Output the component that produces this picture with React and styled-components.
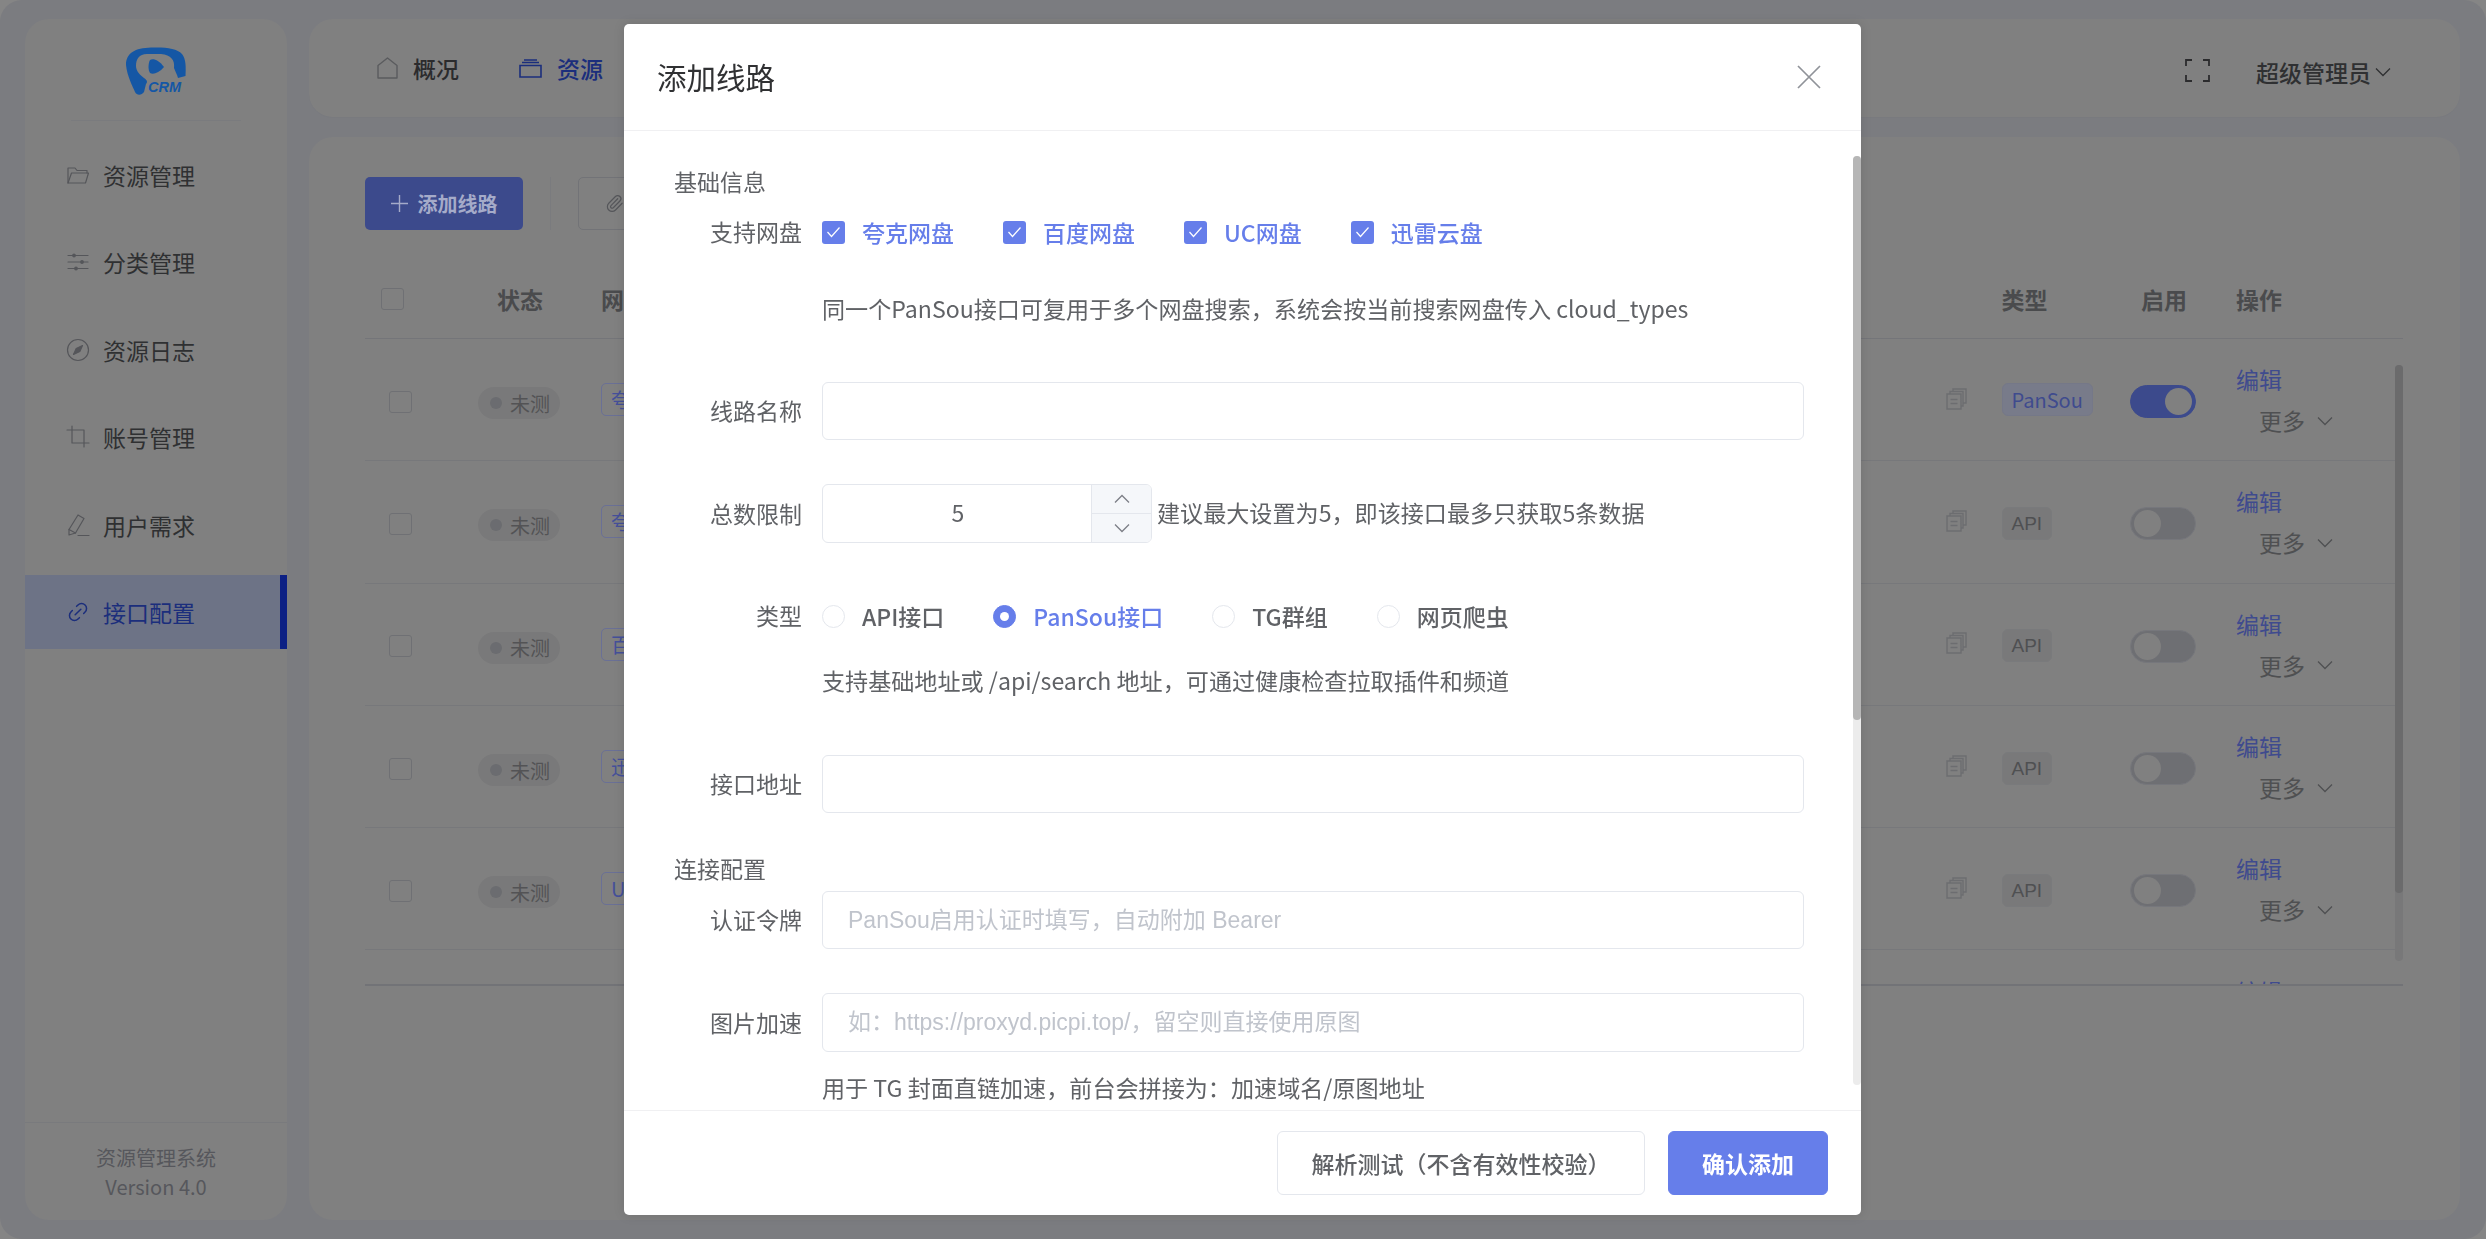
import React from 'react'
import styled, { createGlobalStyle } from 'styled-components'
import { Link2, Paperclip } from 'lucide-react'

const GlobalStyle = createGlobalStyle`
    html, body {
        margin: 0;
        padding: 0;
        background: #858585;
        font-family: "Noto Sans CJK SC", "Noto Sans", sans-serif;
    }
    * { box-sizing: border-box; }
`

const Shell = styled.div`
    width: 2486px;
    height: 1239px;
    display: flex;
    gap: 22px;
    padding: 19px 26px 19px 25px;
    background: #7b7c80;
    border-radius: 22px;
    overflow: hidden;
`

const Sidebar = styled.aside`
    width: 262px;
    flex: none;
    display: flex;
    flex-direction: column;
    background: #808080;
    border-radius: 24px;
`

const LogoArea = styled.div`
    height: 102px;
    margin: 0 46px;
    padding-top: 27px;
    display: flex;
    justify-content: center;
    border-bottom: 1px solid #7a7b7e;
`

const Nav = styled.nav`
    flex: 1;
    display: flex;
    flex-direction: column;
    gap: 13.4px;
    margin-top: 17px;
`

const NavItem = styled.div`
    height: 74px;
    display: flex;
    align-items: center;
    gap: 13px;
    padding-left: 41px;
    font-size: 23px;
    color: ${p => (p.$active ? '#1b2e7c' : '#2f3032')};
    background: ${p => (p.$active ? '#6d7386' : 'transparent')};
    border-right: 7px solid ${p => (p.$active ? '#0c2084' : 'transparent')};
    svg {
        width: 24px;
        height: 24px;
        flex: none;
        color: ${p => (p.$active ? '#1b2e7c' : '#55565a')};
    }
`

const SideFooter = styled.div`
    height: 98px;
    display: flex;
    flex-direction: column;
    align-items: center;
    justify-content: center;
    border-top: 1px solid #797a7d;
    font-size: 20px;
    line-height: 29px;
    color: #56575c;
`

const MainColumn = styled.div`
    flex: 1;
    min-width: 0;
    display: flex;
    flex-direction: column;
    gap: 19px;
`

const TopBar = styled.header`
    height: 99px;
    display: flex;
    align-items: center;
    padding: 0 69px 0 68px;
    background: #808080;
    border-radius: 24px;
    border-bottom: 1px solid #797a7e;
`

const TopNavItem = styled.div`
    display: flex;
    align-items: center;
    gap: ${p => p.$gap}px;
    margin-right: 60px;
    font-size: 23px;
    font-weight: 500;
    color: ${p => (p.$active ? '#1b2e7c' : '#2b2b2d')};
`

const TopRight = styled.div`
    margin-left: auto;
    margin-top: 8px;
    display: flex;
    align-items: center;
    font-size: 23px;
    color: #2f3032;
    font-weight: 500;
`

const FullIcon = styled.svg`
    width: 25px;
    height: 23px;
    margin: -4px 46px 0 0;
`

const ContentCard = styled.section`
    flex: 1;
    min-height: 0;
    padding: 40px 57px 0 56px;
    background: #808080;
    border-radius: 24px;
`

const Toolbar = styled.div`
    height: 53px;
    display: flex;
    align-items: center;
`

const AddButton = styled.div`
    width: 158px;
    height: 53px;
    display: flex;
    align-items: center;
    justify-content: center;
    gap: 10px;
    background: #3c4a8c;
    border-radius: 5px;
    font-size: 20px;
    font-weight: 600;
    color: #a5abc9;
`

const ToolDivider = styled.div`
    width: 1px;
    height: 53px;
    margin: 0 27px;
    background: #7a7b7e;
`

const GhostButton = styled.div`
    width: 200px;
    height: 53px;
    display: flex;
    align-items: center;
    padding-left: 26px;
    border: 1px solid #727377;
    border-radius: 5px;
    color: #55565a;
`

const columns = '80px 150px 1351px 55.5px 128.5px 106px 1fr'

const TableHead = styled.div`
    height: 79px;
    margin-top: 30px;
    display: grid;
    grid-template-columns: ${columns};
    align-items: center;
    border-bottom: 1px solid #747579;
    font-size: 23px;
    font-weight: 700;
    color: #4a4b4d;
`

const HeadCell = styled.div`
    text-align: ${p => (p.$center ? 'center' : 'left')};
    padding-left: ${p => p.$pad || 0}px;
`

const TableBody = styled.div`
    position: relative;
    height: 647px;
    overflow: hidden;
    border-bottom: 2px solid #727377;
`

const Row = styled.div`
    width: 2031px;
    height: 122.3px;
    display: grid;
    grid-template-columns: ${columns};
    align-items: center;
    border-bottom: 1px solid #77787b;
`

const CheckBox = styled.span`
    display: block;
    width: 23px;
    height: 22px;
    margin-left: ${p => p.$left}px;
    margin-top: ${p => p.$top || 0}px;
    border: 1px solid #6f7074;
    border-radius: 3px;
`

const StatusPill = styled.span`
    width: 82px;
    height: 32px;
    margin: 7px 0 0 33px;
    display: flex;
    align-items: center;
    gap: 8px;
    padding-left: 12px;
    background: #79797a;
    border-radius: 16px;
    font-size: 20px;
    color: #535355;
`

const Dot = styled.i`
    width: 12px;
    height: 12px;
    border-radius: 50%;
    background: #6b6c70;
`

const NetTag = styled.span`
    display: inline-flex;
    align-items: center;
    height: 33px;
    padding: 0 9px;
    margin-left: 6px;
    border: 1px solid #6a7096;
    border-radius: 5px;
    font-size: 20px;
    color: #45509a;
`

const CopyIcon = styled.svg`
    width: 21px;
    height: 22px;
    margin-top: -2px;
`

const TypeTag = styled.span`
    justify-self: start;
    height: 33px;
    margin-top: ${p => (p.$blue ? 0 : 3)}px;
    display: inline-flex;
    align-items: center;
    padding: 0 9px;
    border: 1px solid ${p => (p.$blue ? '#757888' : '#797a7c')};
    border-radius: 6px;
    background: ${p => (p.$blue ? '#787b8a' : '#79797a')};
    font-size: ${p => (p.$blue ? '20px' : '19px')};
    line-height: 1;
    font-family: ${p => (p.$blue ? 'inherit' : '"Liberation Sans", sans-serif')};
    color: ${p => (p.$blue ? '#3f4b8e' : '#4f5052')};
`

const Switch = styled.span`
    width: 66px;
    height: 33px;
    margin-top: 4px;
    display: flex;
    align-items: center;
    justify-content: ${p => (p.$on ? 'flex-end' : 'flex-start')};
    padding: 3px;
    border-radius: 17px;
    background: ${p => (p.$on ? '#3c4a8c' : '#6e6f73')};
    border: 1px solid ${p => (p.$on ? '#3c4a8c' : '#76777c')};
    &::after {
        content: '';
        width: 27px;
        height: 27px;
        border-radius: 50%;
        background: #808080;
    }
`

const Actions = styled.div`
    grid-column: 7;
    display: flex;
    flex-direction: column;
    gap: 8px;
    margin-top: 1px;
    font-size: 23px;
    line-height: 33px;
`

const EditLink = styled.span`
    color: #3f4b8e;
`

const MoreLink = styled.span`
    display: flex;
    align-items: center;
    gap: 12px;
    margin-left: 23px;
    color: #4f5052;
`

const Chevron = styled.svg`
    width: 16px;
    height: 10px;
    fill: none;
    stroke: currentColor;
    stroke-width: 1.3;
    flex: none;
`

const TableBar = styled.div`
    position: absolute;
    right: 0;
    top: 26px;
    width: 8px;
    height: 596px;
    border-radius: 4px;
    background: #787879;
    &::before {
        content: '';
        display: block;
        height: 528px;
        border-radius: 4px;
        background: #6b6b6c;
    }
`

/* dialog, sits on top of the dimmed page */
const Mask = styled.div`
    position: fixed;
    inset: 0;
    display: flex;
    align-items: center;
    justify-content: center;
    padding-right: 1px;
`

const Dialog = styled.div`
    position: relative;
    width: 1237px;
    height: 1191px;
    display: flex;
    flex-direction: column;
    background: #fff;
    border-radius: 5px;
    box-shadow: 0 0 12px rgba(0, 0, 0, 0.12);
    overflow: hidden;
`

const DialogHead = styled.div`
    height: 107px;
    flex: none;
    display: flex;
    align-items: center;
    justify-content: space-between;
    padding: 0 40px 0 33px;
    border-bottom: 1px solid #f0f0f2;
`

const DialogTitle = styled.div`
    margin-top: -2px;
    font-size: 29.5px;
    color: #303133;
`

const DialogBody = styled.div`
    flex: 1;
    min-height: 0;
    overflow: hidden;
    padding: 34px 0 0 50px;
`

const SectionTitle = styled.div`
    margin-top: ${p => p.$top || 0}px;
    font-size: 23px;
    line-height: 32px;
    color: #606266;
`

const FormItem = styled.div`
    display: flex;
    align-items: center;
    width: 1130px;
    margin-top: ${p => p.$top}px;
    font-size: 23px;
    line-height: 32px;
    color: #606266;
`

const FormLabel = styled.label`
    width: 127px;
    flex: none;
    margin: -2px 20px 0 1px;
    text-align: right;
    line-height: 32px;
`

const Hint = styled.div`
    margin: ${p => p.$top}px 0 0 148px;
    font-size: 23.1px;
    line-height: 32px;
    color: #606266;
`

const TextInput = styled.input`
    flex: 1;
    height: ${p => p.$h || 58}px;
    padding: 0 25px;
    border: 1.5px solid #e4e7ed;
    border-radius: 6px;
    outline: none;
    background: #fff;
    font-family: "Liberation Sans", "Noto Sans CJK SC", sans-serif;
    font-size: 23px;
    &::placeholder { color: #c0c4cc; opacity: 1; }
`

const Group = styled.div`
    display: flex;
    align-items: center;
    gap: ${p => p.$gap}px;
`

const Option = styled.span`
    display: flex;
    align-items: center;
    gap: 17px;
    font-weight: 500;
    color: ${p => (p.$on ? '#667eea' : '#606266')};
`

const Tick = styled.span`
    width: 23px;
    height: 23px;
    display: flex;
    align-items: center;
    justify-content: center;
    background: #667eea;
    border-radius: 3px;
`

const Radio = styled.span`
    width: 23px;
    height: 23px;
    display: flex;
    align-items: center;
    justify-content: center;
    border-radius: 50%;
    border: 1.5px solid ${p => (p.$on ? '#667eea' : '#e4e7ed')};
    background: ${p => (p.$on ? '#667eea' : '#fff')};
    &::after {
        content: '';
        width: 9px;
        height: 9px;
        border-radius: 50%;
        background: ${p => (p.$on ? '#fff' : 'transparent')};
    }
`

const Stepper = styled.div`
    width: 330px;
    height: 59px;
    flex: none;
    display: flex;
    border: 1.5px solid #e4e7ed;
    border-radius: 6px;
    overflow: hidden;
`

const StepValue = styled.div`
    flex: 1;
    display: flex;
    align-items: center;
    justify-content: center;
    padding: 0 0 4px 2px;
    color: #606266;
`

const StepButtons = styled.div`
    width: 60px;
    display: flex;
    flex-direction: column;
    background: #f5f7fa;
    border-left: 1.5px solid #e4e7ed;
`

const StepButton = styled.div`
    flex: 1;
    display: flex;
    align-items: center;
    justify-content: center;
    color: #7c7f86;
    & + & { border-top: 1.5px solid #e4e7ed; }
`

const StepNote = styled.span`
    margin: -3px 0 0 5px;
    font-size: 23.1px;
    white-space: nowrap;
`

const DialogFoot = styled.div`
    height: 105px;
    flex: none;
    display: flex;
    justify-content: flex-end;
    gap: 23px;
    padding: 20px 33px 0 0;
    border-top: 1px solid #f0f0f2;
`

const FootButton = styled.div`
    height: 64px;
    width: ${p => (p.$primary ? 160 : 368)}px;
    display: flex;
    align-items: center;
    justify-content: center;
    border-radius: 6px;
    font-size: 23px;
    font-weight: ${p => (p.$primary ? 600 : 500)};
    color: ${p => (p.$primary ? '#fff' : '#606266')};
    background: ${p => (p.$primary ? '#667eea' : '#fff')};
    border: 1.5px solid ${p => (p.$primary ? '#667eea' : '#e4e7ed')};
`

const DialogBar = styled.div`
    position: absolute;
    right: 0;
    top: 132px;
    width: 8px;
    height: 929px;
    border-radius: 4px;
    background: #ececec;
    &::before {
        content: '';
        display: block;
        height: 564px;
        border-radius: 4px;
        background: #b6b6b6;
    }
`

const LineIcon = ({ children }) => (
    <svg viewBox="0 0 24 24" fill="none" stroke="currentColor" strokeWidth="1.2" strokeLinejoin="round" strokeLinecap="round">
        {children}
    </svg>
)

const Logo = () => (
    <svg width="62" height="50" viewBox="10 6 62 50">
        <path
            fill="#1557a5"
            d="M11 25C11 13 20 8 36 7.500C50 7 62 8 67 14C71 19 71 27 70.500 36L63 38C62 34 60 31 59 28C60 20 56 15 46 14L32 14C24 14 21 19 21 26C21 31 25 35 29 38C32 40 33 42 31 44L29 52C27 55 22 56 20 52C18 47 12 36 11 25Z"
        />
        <path fill="#1557a5" d="M35 20C38 18 44 20 49 27C44 33 38 35 35 33C33 30 33 24 35 20Z" />
        <text x="33" y="52" fontFamily="Liberation Sans, sans-serif" fontSize="14.500" fontWeight="700" fontStyle="italic" fill="#1557a5">CRM</text>
    </svg>
)

const navItems = [
    {
        label: '资源管理',
        icon: (
            <LineIcon>
                <path d="M2 20V5h7l2 2.500h10V10" />
                <path d="M2 20l3.500-10H22.500l-3 10Z" />
            </LineIcon>
        ),
    },
    {
        label: '分类管理',
        icon: (
            <LineIcon>
                <path d="M2 5.500h20M2 12h20M2 18.500h20" />
                <circle cx="8" cy="5.500" r="1.300" fill="currentColor" />
                <circle cx="16" cy="12" r="1.300" fill="currentColor" />
                <circle cx="10" cy="18.500" r="1.300" fill="currentColor" />
            </LineIcon>
        ),
    },
    {
        label: '资源日志',
        icon: (
            <LineIcon>
                <circle cx="12" cy="12" r="10.500" />
                <path d="M16.500 7.500l-6.300 3-2.700 6 6.300-3Z" fill="currentColor" />
            </LineIcon>
        ),
    },
    {
        label: '账号管理',
        icon: (
            <LineIcon>
                <path d="M6 1v17h17" />
                <path d="M1 5h17v17" />
            </LineIcon>
        ),
    },
    {
        label: '用户需求',
        icon: (
            <LineIcon>
                <path d="M3 16.500L12 2l6 3.500L9.500 20l-6.500 2Z" />
                <path d="M3 16.500l6.500 3.500M12 22.500h11" />
            </LineIcon>
        ),
    },
    { label: '接口配置', active: true, icon: <Link2 strokeWidth={1.5} style={{ transform: 'rotate(-45deg)' }} /> },
]

const rows = [
    { net: '夸克网盘', type: 'PanSou', on: true },
    { net: '夸克网盘', type: 'API' },
    { net: '百度网盘', type: 'API' },
    { net: '迅雷云盘', type: 'API' },
    { net: 'UC网盘', type: 'API' },
]

const ChevronDown = () => (
    <Chevron viewBox="0 0 16 10">
        <path d="M1 1.500l7 7 7-7" />
    </Chevron>
)

const ChevronUp = () => (
    <Chevron viewBox="0 0 16 10">
        <path d="M1 8.500l7-7 7 7" />
    </Chevron>
)

export default function App() {
    return (
        <>
            <GlobalStyle />
            <Shell>
                <Sidebar>
                    <LogoArea>
                        <Logo />
                    </LogoArea>
                    <Nav>
                        {navItems.map(item => (
                            <NavItem key={item.label} $active={item.active}>
                                {item.icon}
                                {item.label}
                            </NavItem>
                        ))}
                    </Nav>
                    <SideFooter>
                        <div>资源管理系统</div>
                        <div>Version 4.0</div>
                    </SideFooter>
                </Sidebar>

                <MainColumn>
                    <TopBar>
                        <TopNavItem $gap={15}>
                            <svg width="21" height="22" viewBox="0 0 21 22" fill="none" stroke="#5a5b5e" strokeWidth="1.4">
                                <path d="M1 21V8.500L10.500 1 20 8.500V21Z" strokeLinejoin="round" />
                            </svg>
                            概况
                        </TopNavItem>
                        <TopNavItem $active $gap={15}>
                            <svg width="23" height="19" viewBox="0 0 23 19" fill="none" stroke="#1b2e7c" strokeWidth="1.6">
                                <path d="M1 6.500h21V18H1ZM3 3.500h17M5 1h13" />
                            </svg>
                            资源
                        </TopNavItem>
                        <TopRight>
                            <FullIcon viewBox="0 0 25 23" fill="none" stroke="#2b2b2d" strokeWidth="1.8">
                                <path d="M1 7V1h6M18 1h6v6M24 16v6h-6M7 22H1v-6" />
                            </FullIcon>
                            超级管理员
                            <span style={{ width: 4 }} />
                            <ChevronDown />
                        </TopRight>
                    </TopBar>

                    <ContentCard>
                        <Toolbar>
                            <AddButton>
                                <svg width="17" height="17" viewBox="0 0 17 17" stroke="currentColor" strokeWidth="1.4">
                                    <path d="M8.500 0v17M0 8.500h17" />
                                </svg>
                                添加线路
                            </AddButton>
                            <ToolDivider />
                            <GhostButton>
                                <Paperclip size={19} strokeWidth={1.5} />
                            </GhostButton>
                        </Toolbar>

                        <TableHead>
                            <CheckBox $left={16} />
                            <HeadCell $center>状态</HeadCell>
                            <HeadCell $pad={6}>网盘</HeadCell>
                            <span />
                            <HeadCell>类型</HeadCell>
                            <HeadCell $pad={11}>启用</HeadCell>
                            <HeadCell>操作</HeadCell>
                        </TableHead>

                        <TableBody>
                            {rows.map((row, i) => (
                                <Row key={i}>
                                    <CheckBox $left={24} $top={4} />
                                    <StatusPill>
                                        <Dot />
                                        未测
                                    </StatusPill>
                                    <div>
                                        <NetTag>{row.net}</NetTag>
                                    </div>
                                    <CopyIcon viewBox="0 0 21 22" fill="none" stroke="#6c6d70" strokeWidth="1.4">
                                        <path d="M1 6h14v15H1ZM4 6V3.500h13V18h-2M7 3.500V1h13v14h-3M4.500 11.500h7M4.500 15.500h7" />
                                    </CopyIcon>
                                    <TypeTag $blue={row.on}>{row.type}</TypeTag>
                                    <Switch $on={row.on} />
                                    <Actions>
                                        <EditLink>编辑</EditLink>
                                        <MoreLink>
                                            更多
                                            <ChevronDown />
                                        </MoreLink>
                                    </Actions>
                                </Row>
                            ))}
                            {/* next row, only the top of its link shows above the fold */}
                            <Row>
                                <Actions>
                                    <EditLink>编辑</EditLink>
                                    <MoreLink>&nbsp;</MoreLink>
                                </Actions>
                            </Row>
                            <TableBar />
                        </TableBody>
                    </ContentCard>
                </MainColumn>
            </Shell>

            <Mask>
                <Dialog>
                    <DialogHead>
                        <DialogTitle>添加线路</DialogTitle>
                        <svg width="24" height="24" viewBox="0 0 24 24" fill="none" stroke="#909399" strokeWidth="1.7">
                            <path d="M1 1l22 22M23 1L1 23" />
                        </svg>
                    </DialogHead>

                    <DialogBody>
                        <SectionTitle>基础信息</SectionTitle>
                        <FormItem $top={19}>
                            <FormLabel>支持网盘</FormLabel>
                            <Group $gap={49}>
                                {['夸克网盘', '百度网盘', 'UC网盘', '迅雷云盘'].map(name => (
                                    <Option key={name} $on>
                                        <Tick>
                                            <svg width="15" height="12" viewBox="0 0 15 12" fill="none" stroke="#fff" strokeWidth="1.2">
                                                <path d="M1.500 6l4 4.500 8-9" />
                                            </svg>
                                        </Tick>
                                        {name}
                                    </Option>
                                ))}
                            </Group>
                        </FormItem>
                        <Hint $top={44}>同一个PanSou接口可复用于多个网盘搜索，系统会按当前搜索网盘传入 cloud_types</Hint>

                        <FormItem $top={58}>
                            <FormLabel>线路名称</FormLabel>
                            <TextInput />
                        </FormItem>

                        <FormItem $top={44}>
                            <FormLabel>总数限制</FormLabel>
                            <Stepper>
                                <StepValue>5</StepValue>
                                <StepButtons>
                                    <StepButton><ChevronUp /></StepButton>
                                    <StepButton><ChevronDown /></StepButton>
                                </StepButtons>
                            </Stepper>
                            <StepNote>建议最大设置为5，即该接口最多只获取5条数据</StepNote>
                        </FormItem>

                        <FormItem $top={57}>
                            <FormLabel>类型</FormLabel>
                            <Group $gap={49}>
                                <Option><Radio />API接口</Option>
                                <Option $on><Radio $on />PanSou接口</Option>
                                <Option><Radio />TG群组</Option>
                                <Option><Radio />网页爬虫</Option>
                            </Group>
                        </FormItem>
                        <Hint $top={32}>支持基础地址或 /api/search 地址，可通过健康检查拉取插件和频道</Hint>

                        <FormItem $top={59}>
                            <FormLabel>接口地址</FormLabel>
                            <TextInput />
                        </FormItem>

                        <SectionTitle $top={39}>连接配置</SectionTitle>
                        <FormItem $top={7}>
                            <FormLabel>认证令牌</FormLabel>
                            <TextInput placeholder="PanSou启用认证时填写，自动附加 Bearer" />
                        </FormItem>
                        <FormItem $top={44}>
                            <FormLabel>图片加速</FormLabel>
                            <TextInput $h={59} placeholder="如：https://proxyd.picpi.top/，留空则直接使用原图" />
                        </FormItem>
                        <Hint $top={19}>用于 TG 封面直链加速，前台会拼接为：加速域名/原图地址</Hint>
                    </DialogBody>

                    <DialogFoot>
                        <FootButton>解析测试（不含有效性校验）</FootButton>
                        <FootButton $primary>确认添加</FootButton>
                    </DialogFoot>
                    <DialogBar />
                </Dialog>
            </Mask>
        </>
    )
}
